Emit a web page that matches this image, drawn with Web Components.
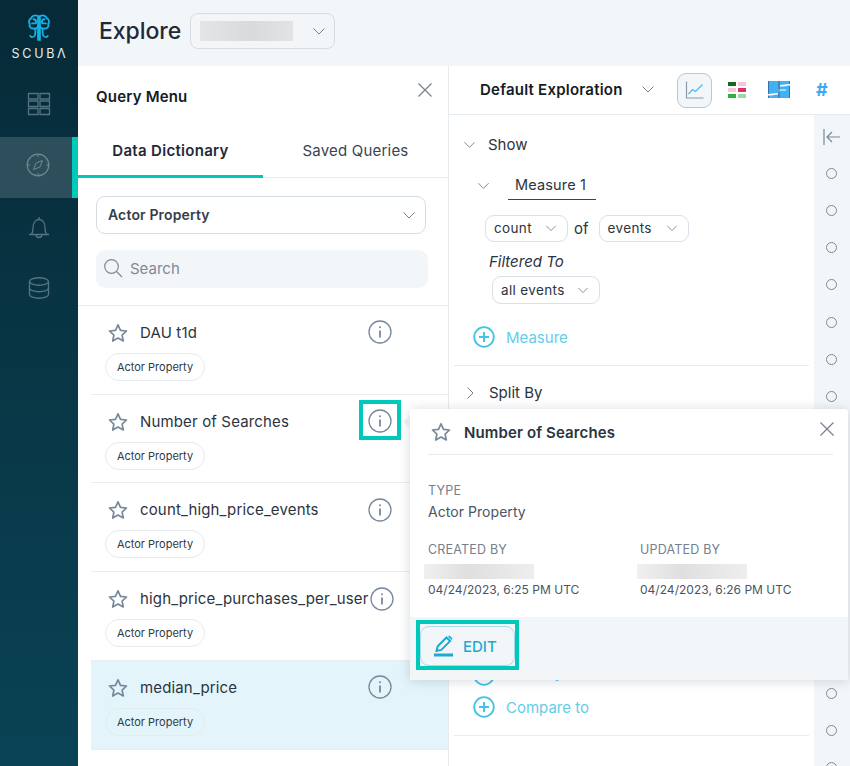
<!DOCTYPE html>
<html>
<head>
<meta charset="utf-8">
<style>
    html, body { margin: 0; height: 100%; overflow: hidden; }
    body { font-family: Inter, "Liberation Sans", sans-serif; color: #1f2a37; }
</style>
</head>
<body>
<scuba-app></scuba-app>

<script>
const chevronDown = (w = 14, c = "#76808c") => `<svg width="${w}" height="${w}" viewBox="0 0 14 14" fill="none" stroke="${c}" stroke-width="1"><path d="M1.500 4.500 7 10l5.500-5.500"/></svg>`;
const chevronRight = `<svg width="14" height="14" viewBox="0 0 14 14" fill="none" stroke="#76808c" stroke-width="1"><path d="M4.500 1.500 10 7l-5.500 5.500"/></svg>`;
const closeIcon = `<svg width="16" height="16" viewBox="0 0 16 16" fill="none" stroke="#76808c" stroke-width="1.200"><path d="M1.500 1.500l13 13M14.500 1.500l-13 13"/></svg>`;
const starIcon = `<svg width="20" height="20" viewBox="0 0 20 20" fill="none" stroke="#76899c" stroke-width="1.700" stroke-linejoin="round"><path d="M10 1.800l2.500 5.500 6 .7-4.400 4.100 1.200 5.900L10 15.100 4.700 18l1.200-5.900L1.500 8l6-.7z"/></svg>`;
const infoIcon = `<svg width="24" height="24" viewBox="0 0 24 24" fill="none" stroke="#76899c"><circle cx="12" cy="12" r="11" stroke-width="1.300"/><path d="M12 10.500v7" stroke-width="1.800"/><circle cx="12" cy="7.300" r="1" fill="#76899c" stroke="none"/></svg>`;
const plusIcon = `<svg width="22" height="22" viewBox="0 0 22 22" fill="none" stroke="#3fc4e4"><circle cx="11" cy="11" r="9.800" stroke-width="1.800"/><path d="M11 6v10M6 11h10" stroke-width="1.900"/></svg>`;

class ScubaSidebar extends HTMLElement {
    connectedCallback() {
        this.attachShadow({ mode: "open" }).innerHTML = `
            <style>
                :host {
                    display: flex;
                    flex-direction: column;
                    width: 78px;
                    flex: none;
                    background: linear-gradient(180deg, #062a37 0%, #0a4355 100%);
                }
                .logo { height: 72px; display: flex; flex-direction: column; align-items: center; padding-top: 13px; box-sizing: border-box; }
                .logo span { color: #e8eef0; font-size: 12.500px; letter-spacing: 2.700px; margin-top: 4px; line-height: 14px; margin-right: -2px; }
                .nav { height: 61px; display: flex; align-items: center; justify-content: center; box-sizing: border-box; }
                .active { background: #2d4f5b; border-right: 6px solid #00c8bb; padding: 0 0 5px 4px; }
            </style>
            <div class="logo">
                <svg width="24" height="30" viewBox="0 0 26 30" fill="none" stroke="#14b0e6" stroke-width="2" stroke-linecap="round">
                    <path d="M12 2C8 .5 5 2 4.500 4.500 2 5.500 1.500 9 3 10.500 2 13 4 16 7 15.500c2 .5 4-.5 5-2z"/>
                    <path d="M14 2c4-1.500 7 0 7.500 2.500 2.500 1 3 4.500 1.500 6 1 2.500-1 5.500-4 5-2 .5-4-.5-5-2z"/>
                    <path d="M7 5.500c2 0 3 1.500 3 3.500M19 5.500c-2 0-3 1.500-3 3.500M5.500 10h4M20.500 10h-4"/>
                    <path d="M12 13v15M14 13v15M9 16c0 4 1 7-2 8.500-1.500.7-3 0-3.500-1M17 16c0 4-1 7 2 8.500 1.500.7 3 0 3.500-1"/>
                </svg>
                <span>SCUBΛ</span>
            </div>
            <div class="nav" style="height:65px;padding-bottom:1px">
                <svg width="24" height="24" viewBox="0 0 24 24" fill="none" stroke="#557380" stroke-width="1.300"><path d="M1.500 1.500h9.500v5.500H1.500zM13 1.500h9.500v5.500H13zM1.500 9h9.500v5.500H1.500zM13 9h9.500v5.500H13zM1.500 16.500h9.500v6H1.500zM13 16.500h9.500v6H13z"/></svg>
            </div>
            <div class="nav active">
                <svg width="24" height="24" viewBox="0 0 24 24" fill="none" stroke="#70898f" stroke-width="1.300"><circle cx="12" cy="12" r="10.800"/><path d="M16.500 7.500l-6.500 2.500-2.500 6.500 6.500-2.500zM12 1.500v2.500M12 20v2.500M1.500 12H4M20 12h2.500" stroke-width="1"/></svg>
            </div>
            <div class="nav" style="padding-bottom:3px">
                <svg width="22" height="24" viewBox="0 0 22 24" fill="none" stroke="#557380" stroke-width="1.300"><path d="M1 19.500h20M3.500 19.500c1-1.500 1.500-3 1.500-7 0-4 2-8 6-8s6 4 6 8c0 4 .5 5.500 1.500 7M11 2v2.500M8 19.500c0 2 1.500 3 3 3s3-1 3-3"/></svg>
            </div>
            <div class="nav" style="padding-bottom:4px">
                <svg width="22" height="24" viewBox="0 0 22 24" fill="none" stroke="#557380" stroke-width="1.400"><ellipse cx="11" cy="5.500" rx="9.500" ry="3.800"/><path d="M1.500 5.500v13c0 2.100 4.300 3.800 9.500 3.800s9.500-1.700 9.500-3.800v-13M1.500 12c0 2.100 4.300 3.800 9.500 3.800s9.500-1.700 9.500-3.800"/></svg>
            </div>
        `;
    }
}

class ScubaHeader extends HTMLElement {
    connectedCallback() {
        this.attachShadow({ mode: "open" }).innerHTML = `
            <style>
                :host {
                    display: flex;
                    align-items: center;
                    height: 66px;
                    flex: none;
                    padding: 0 0 4px 21px;
                    gap: 9px;
                    background: #f3f6f9;
                    box-sizing: border-box;
                }
                h1 { margin: 0; font-size: 23px; font-weight: 500; color: #1f2a37; letter-spacing: -.05px; }
                .select {
                    width: 145px; height: 36px;
                    border: 1px solid #d5dde5; border-radius: 8px;
                    box-sizing: border-box; display: flex; align-items: center;
                    padding: 0 8px 0 9px; justify-content: space-between;
                }
                .blur { width: 93px; height: 20px; background: linear-gradient(90deg, #e4e5e6, #d9dadb 55%, #e2e3e4); }
            </style>
            <h1>Explore</h1>
            <div class="select"><div class="blur"></div>${chevronDown(14)}</div>
        `;
    }
}

class DictItem extends HTMLElement {
    connectedCallback() {
        const selected = this.hasAttribute("selected");
        this.attachShadow({ mode: "open" }).innerHTML = `
            <style>
                :host {
                    display: block;
                    height: 88.750px;
                    box-sizing: border-box;
                    margin-left: 13px;
                    padding: 14.600px 0 0 14px;
                    border-bottom: 1px solid #e9edf2;
                    background: ${selected ? "#e3f5fa" : "transparent"};
                }
                .row { display: flex; align-items: center; width: 287px; height: 24px; }
                .star { flex: none; width: 20px; height: 20px; margin-right: 12px; margin-left: 3px; margin-top: 1px; }
                .name { flex: 1; font-size: 15px; white-space: nowrap; color: #2b3440; letter-spacing: .15px; }
                .info { flex: none; width: 24px; height: 24px; margin-left: 2px; }
                .tag {
                    display: inline-block; margin-top: 8.400px;
                    height: 28px; width: 100px; box-sizing: border-box; text-align: center;
                    border: 1px solid #e6ebf0; border-radius: 14px;
                    font-size: 11px; line-height: 26px; color: #2f3a46;
                }
            </style>
            <div class="row">
                <span class="star">${starIcon}</span>
                <span class="name"><slot></slot></span>
                <span class="info">${infoIcon}</span>
            </div>
            <span class="tag">Actor Property</span>
        `;
    }
}

class QueryMenu extends HTMLElement {
    connectedCallback() {
        this.attachShadow({ mode: "open" }).innerHTML = `
            <style>
                :host {
                    display: flex;
                    flex-direction: column;
                    width: 371px;
                    flex: none;
                    background: #fff;
                    border-right: 1px solid #e6ebf0;
                    box-sizing: border-box;
                    overflow: hidden;
                }
                .title { height: 59px; display: flex; justify-content: space-between; padding: 16px 15px 0 18px; box-sizing: border-box; }
                .title b { font-size: 15px; font-weight: 600; color: #141b24; padding-top: 5px; letter-spacing: .2px; }
                .tabs { display: flex; height: 52px; border-bottom: 1px solid #e6ebf0; }
                .tab { display: flex; align-items: center; justify-content: center; font-size: 15px; letter-spacing: .2px; padding-bottom: 2px; box-sizing: border-box; color: #3a4450; }
                .tab.on { width: 185px; font-weight: 600; color: #1f2a37; border-bottom: 3px solid #00c8bb; margin-bottom: -1px; letter-spacing: .3px; padding-bottom: 0; }
                .tab.off { width: 185px; }
                .select {
                    margin: 18px 22px 0 18px; height: 38px; box-sizing: border-box;
                    border: 1px solid #d5dde5; border-radius: 9px;
                    display: flex; align-items: center; justify-content: space-between;
                    padding: 0 9px 1px 11px; font-size: 14px; font-weight: 600; color: #343e4a; letter-spacing: .15px;
                }
                .search {
                    margin: 16px 20px 0 18px; height: 38px; border-radius: 9px; background: #f3f6f9;
                    display: flex; align-items: center; gap: 7px; padding: 0 0 2px 7px; box-sizing: border-box;
                    font-size: 15px; color: #7f8a96;
                }
                .rule { height: 1px; background: #e6ebf0; margin-top: 16.850px; flex: none; }
            </style>
            <div class="title"><b>Query Menu</b>${closeIcon}</div>
            <div class="tabs">
                <div class="tab on">Data Dictionary</div>
                <div class="tab off">Saved Queries</div>
            </div>
            <div class="select">Actor Property ${chevronDown(14)}</div>
            <div class="search">
                <svg width="20" height="20" viewBox="0 0 20 20" fill="none" stroke="#7f8a96" stroke-width="1.200"><circle cx="8.500" cy="8.500" r="6.800"/><path d="M13.500 13.500l5.500 5.500"/></svg>
                Search
            </div>
            <div class="rule"></div>
            <slot></slot>
        `;
    }
}

class SmallSelect extends HTMLElement {
    connectedCallback() {
        this.attachShadow({ mode: "open" }).innerHTML = `
            <style>
                :host {
                    display: inline-flex; align-items: center; justify-content: space-between;
                    height: 27px; box-sizing: border-box; padding: 0 10px 1px 8px;
                    border: 1px solid #d9e0e7; border-radius: 9px;
                    font-size: 13.500px; color: #2b3440; letter-spacing: .35px; background: #fff;
                }
            </style>
            <slot></slot>${chevronDown(12)}
        `;
    }
}

class ExplorePanel extends HTMLElement {
    connectedCallback() {
        let circles = "";
        for (let i = 0; i < 17; i++) circles += `<i></i>`;

        this.attachShadow({ mode: "open" }).innerHTML = `
            <style>
                :host { display: flex; flex-direction: column; flex: 1; min-width: 0; background: #fff; overflow: hidden; }
                .top { height: 49px; flex: none; border-bottom: 1px solid #e6ebf0; display: flex; align-items: center; box-sizing: border-box; padding: 0 0 2px 31px; }
                .top b { font-size: 15px; font-weight: 600; color: #141b24; width: 161px; letter-spacing: .23px; white-space: nowrap; }
                .chart { width: 35px; height: 35px; box-sizing: border-box; border: 1px solid #b9c6d3; border-radius: 9px; background: #f3f6f9; display: flex; align-items: center; justify-content: center; margin-left: 22px; margin-top: 2px; }
                .hash { color: #3ea9f5; font-size: 18px; font-weight: 700; margin-left: 26px; }
                .body { flex: 1; display: flex; min-height: 0; }
                .form { flex: 1; padding: 0 5px; min-width: 0; }
                .rail { width: 36px; flex: none; background: #f3f6f9; display: flex; flex-direction: column; align-items: center; padding: 13px 2px 0 0; box-sizing: border-box; }
                .rail i { display: block; width: 9px; height: 9px; border: 1px solid #7f8a96; border-radius: 50%; margin-bottom: 26.140px; flex: none; box-sizing: content-box; }
                .rail svg { margin-bottom: 22px; flex: none; margin-right: -1px; }
                .line { display: flex; align-items: center; font-size: 15px; color: #2b3440; }
                .show { margin-top: 21px; padding-left: 9px; gap: 12px; height: 17px; }
                .measure { margin-top: 17px; padding-left: 23px; height: 30px; }
                .measure span { margin-left: 18px; padding: 0 7px; width: 88px; box-sizing: border-box; height: 30px; line-height: 30px; border-bottom: 1px solid #3a4450; font-size: 14.500px; letter-spacing: .15px; white-space: nowrap; }
                .sel { margin-top: 15px; padding-left: 31px; height: 27px; font-size: 15px; }
                .sel .of { margin: 0 10px 0 6px; }
                .filter { margin-top: 9px; padding: 2px 0 0 35px; box-sizing: border-box; font-style: italic; font-size: 15px; height: 19px; }
                .all { margin-top: 6px; padding-left: 38px; height: 28px; }
                .add { margin-top: 22px; padding-left: 19px; height: 22px; gap: 11px; color: #63cde9; font-size: 15px; }
                .add .under { margin-bottom: 5px; }
                hr { border: none; border-top: 1px solid #e6ebf0; margin: 17px 0 0 0; }
                .split { margin-top: 18px; }
                .up { margin-top: 1px; }
            </style>
            <div class="top">
                <b>Default Exploration</b>${chevronDown(14)}
                <div class="chart">
                    <svg width="20" height="20" viewBox="0 0 20 20" fill="none"><path d="M1.500 1.500v16.500h17" stroke="#8d9aa8" stroke-width="1.200"/><path d="M3.500 14l4-4.500 3 2 7-7" stroke="#4db8f0" stroke-width="1.200"/></svg>
                </div>
                <svg class="up" style="margin-left:16px" width="18" height="16" viewBox="0 0 18 16"><rect width="8" height="4" fill="#0d6b1f"/><rect x="10" width="8" height="4" fill="#f6c6d6"/><rect y="6" width="8" height="4" fill="#f6c6d6"/><rect x="10" y="6" width="8" height="4" fill="#de2f6c"/><rect y="12" width="8" height="4" fill="#2eb03e"/><rect x="10" y="12" width="8" height="4" fill="#9bdc9f"/></svg>
                <svg class="up" style="margin-left:22px" width="22" height="17" viewBox="0 0 22 17"><rect width="22" height="17" fill="#3fb2f5"/><path d="M.5 0v17M21.500 0v17" stroke="#3b6fa8"/><path d="M11 0v8M11 11v6" stroke="#5f7fa8" stroke-width="2"/><path d="M12 4c4 0 6-1 10-1v1.500c-4 .5-6 1-10 1zM0 13c4 0 6-1 10-1v1.500c-4 .5-6 1-10 1zM12 8.500h6v1h-6z" fill="#fff"/></svg>
                <span class="hash">#</span>
            </div>
            <div class="body">
                <div class="form">
                    <div class="line show">${chevronDown(13)}<span>Show</span></div>
                    <div class="line measure">${chevronDown(13)}<span>Measure 1</span></div>
                    <div class="line sel"><small-select style="width:83px">count</small-select><span class="of">of</span><small-select style="width:90px">events</small-select></div>
                    <div class="line filter">Filtered To</div>
                    <div class="line all"><small-select style="width:108px;height:28px">all events</small-select></div>
                    <div class="line add">${plusIcon}<span>Measure</span></div>
                    <hr>
                    <div class="line show split">${chevronRight}<span>Split By</span></div>
                    <div class="line add" style="margin-top:263px">${plusIcon}<span class="under">Filter by</span></div>
                    <div class="line add" style="margin-top:10px">${plusIcon}<span>Compare to</span></div>
                    <hr>
                </div>
                <div class="rail">
                    <svg width="18" height="18" viewBox="0 0 18 18" fill="none" stroke="#76899c" stroke-width="1.200"><path d="M1 1v16M17 9H4M9 4 4 9l5 5"/></svg>
                    ${circles}
                </div>
            </div>
        `;
    }
}

class InfoPopover extends HTMLElement {
    connectedCallback() {
        this.attachShadow({ mode: "open" }).innerHTML = `
            <style>
                :host {
                    position: absolute; left: 410px; top: 409px; width: 438px; height: 271px;
                    background: #fff; border-radius: 3px; box-sizing: border-box;
                    box-shadow: 0 1px 12px rgba(60, 80, 100, .22);
                    display: flex; flex-direction: column;
                }
                .arrow { position: absolute; left: -6px; top: 7px; width: 0; height: 0; border: 6px solid transparent; border-left: 0; border-right-color: #e3e8ee; }
                .head { height: 46px; margin: 0 15px 0 18px; border-bottom: 1px solid #e6ebf0; display: flex; align-items: center; box-sizing: border-box; padding: 0 0 0 3px; flex: none; }
                .head b { flex: 1; font-size: 15px; font-weight: 600; color: #2b3440; margin: 1px 0 0 13px; letter-spacing: .13px; }
                .head svg:last-child { margin-top: -5px; margin-right: -2px; }
                .meta { padding: 28px 18px 0; flex: 1; }
                .lbl { color: #76808c; font-size: 12.500px; line-height: 15px; letter-spacing: .2px; }
                .val { font-size: 14px; color: #4a5562; line-height: 20px; margin-top: 4px; letter-spacing: .05px; }
                .cols { display: flex; margin-top: 20px; }
                .col { width: 212px; flex: none; }
                .blur { width: 110px; height: 15px; margin: 7px 0 3px -4px; background: linear-gradient(90deg, #f0f0f0, #dfdfdf 40%, #eee); }
                .date { color: #4a5562; font-size: 12px; line-height: 15px; letter-spacing: .02px; white-space: nowrap; }
                .foot { height: 63px; background: #f3f6f9; flex: none; padding: 9px 0 0 10px; box-sizing: border-box; }
                .edit { width: 95px; height: 40px; box-sizing: border-box; border: 1px solid #a3dcec; border-radius: 9px; display: flex; align-items: center; gap: 9px; padding-left: 13px; color: #1fa9d0; font-size: 15px; font-weight: 500; background: #f3f6f9; }
            </style>
            <div class="arrow"></div>
            <div class="head">
                ${starIcon}
                <b>Number of Searches</b>
                ${closeIcon}
            </div>
            <div class="meta">
                <div class="lbl">TYPE</div>
                <div class="val">Actor Property</div>
                <div class="cols">
                    <div class="col"><div class="lbl">CREATED BY</div><div class="blur"></div><div class="date">04/24/2023, 6:25 PM UTC</div></div>
                    <div class="col"><div class="lbl">UPDATED BY</div><div class="blur" style="margin-left:-3px"></div><div class="date">04/24/2023, 6:26 PM UTC</div></div>
                </div>
            </div>
            <div class="foot">
                <div class="edit">
                    <svg width="20" height="22" viewBox="0 0 20 22" fill="none"><path d="M2.500 16l1.200-4.800 8.800-8.700 3.600 3.600-8.800 8.800z" stroke="#1fa9d0" stroke-width="2"/><path d="M14 1.500l1.500-1 3 3-1 1.500z" fill="#1fa9d0"/><rect x="0" y="18.500" width="19" height="3" fill="#1fa9d0"/></svg>
                    EDIT
                </div>
            </div>
        `;
    }
}

class MarkBox extends HTMLElement {
    connectedCallback() {
        this.attachShadow({ mode: "open" }).innerHTML = `
            <style>
                :host { position: absolute; box-sizing: border-box; border: 4px solid #00c8bb; display: block; }
            </style>
        `;
    }
}

class ScubaApp extends HTMLElement {
    connectedCallback() {
        this.attachShadow({ mode: "open" }).innerHTML = `
            <style>
                :host { display: flex; position: relative; width: 850px; height: 766px; overflow: hidden; }
                .main { flex: 1; display: flex; flex-direction: column; min-width: 0; }
                .columns { flex: 1; display: flex; min-height: 0; }
            </style>
            <scuba-sidebar></scuba-sidebar>
            <div class="main">
                <scuba-header></scuba-header>
                <div class="columns">
                    <query-menu>
                        <dict-item>DAU t1d</dict-item>
                        <dict-item>Number of Searches</dict-item>
                        <dict-item>count_high_price_events</dict-item>
                        <dict-item>high_price_purchases_per_user</dict-item>
                        <dict-item selected>median_price</dict-item>
                    </query-menu>
                    <explore-panel></explore-panel>
                </div>
            </div>
            <info-popover></info-popover>
            <mark-box style="left:359px;top:400px;width:42px;height:40px"></mark-box>
            <mark-box style="left:416px;top:620px;width:103px;height:50px"></mark-box>
        `;
    }
}

customElements.define("scuba-sidebar", ScubaSidebar);
customElements.define("scuba-header", ScubaHeader);
customElements.define("dict-item", DictItem);
customElements.define("query-menu", QueryMenu);
customElements.define("small-select", SmallSelect);
customElements.define("explore-panel", ExplorePanel);
customElements.define("info-popover", InfoPopover);
customElements.define("mark-box", MarkBox);
customElements.define("scuba-app", ScubaApp);
</script>
</body>
</html>
